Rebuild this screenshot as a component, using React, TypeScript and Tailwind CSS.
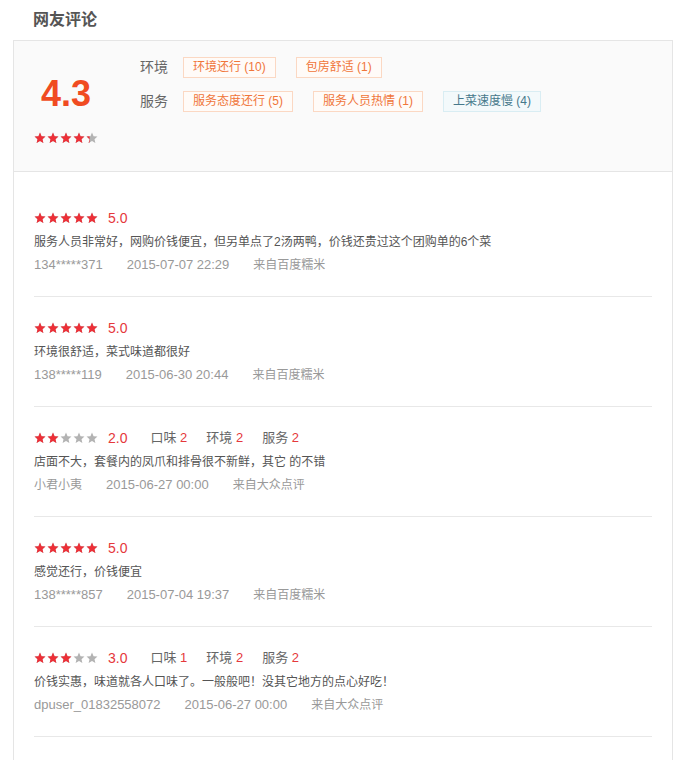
import React from "react";

const FONT = { fontFamily: '"Liberation Sans", "Noto Sans CJK SC", sans-serif' };

const tagRows = [
  {
    label: "环境",
    tags: [
      { text: "环境还行 (10)", bad: false },
      { text: "包房舒适 (1)", bad: false },
    ],
  },
  {
    label: "服务",
    tags: [
      { text: "服务态度还行 (5)", bad: false },
      { text: "服务人员热情 (1)", bad: false },
      { text: "上菜速度慢 (4)", bad: true },
    ],
  },
];

type Review = {
  score: number;
  sub?: [number, number, number];
  text: string;
  user: string;
  userCjk?: boolean;
  time: string;
  source: string;
};

const reviews: Review[] = [
  {
    score: 5,
    text: "服务人员非常好，网购价钱便宜，但另单点了2汤两鸭，价钱还贵过这个团购单的6个菜",
    user: "134*****371",
    time: "2015-07-07 22:29",
    source: "来自百度糯米",
  },
  {
    score: 5,
    text: "环境很舒适，菜式味道都很好",
    user: "138*****119",
    time: "2015-06-30 20:44",
    source: "来自百度糯米",
  },
  {
    score: 2,
    sub: [2, 2, 2],
    text: "店面不大，套餐内的凤爪和排骨很不新鲜，其它 的不错",
    user: "小君小夷",
    userCjk: true,
    time: "2015-06-27 00:00",
    source: "来自大众点评",
  },
  {
    score: 5,
    text: "感觉还行，价钱便宜",
    user: "138*****857",
    time: "2015-07-04 19:37",
    source: "来自百度糯米",
  },
  {
    score: 3,
    sub: [1, 2, 2],
    text: "价钱实惠，味道就各人口味了。一般般吧！没其它地方的点心好吃！",
    user: "dpuser_01832558072",
    time: "2015-06-27 00:00",
    source: "来自大众点评",
  },
];

const STAR = "M6 0.6l1.55 3.6 3.9.35-2.95 2.58.88 3.82L6 8.95 2.62 10.95l.88-3.82L.55 4.55l3.9-.35z";

function Stars({ value, id }: { value: number; id: string }) {
  return (
    <span className="flex gap-[1px]">
      {[0, 1, 2, 3, 4].map((i) => {
        const fill = Math.max(0, Math.min(1, value - i));
        return (
          <svg key={i} width="12" height="12" viewBox="0 0 12 12">
            <defs>
              <clipPath id={`${id}-${i}`}>
                <rect x="0" y="0" width={12 * fill} height="12" />
              </clipPath>
            </defs>
            <path d={STAR} fill="#b3b3b3" />
            <path d={STAR} fill="#ed2f37" clipPath={`url(#${id}-${i})`} />
          </svg>
        );
      })}
    </span>
  );
}

export default function App() {
  return (
    <div className="w-[688px] h-[760px] overflow-hidden bg-white" style={FONT}>
      <h2 className="pl-[33px] pt-[9px] h-[40px] text-[16px] font-bold leading-[22px] text-[#555]">网友评论</h2>
      <div className="mx-[13px] w-[660px] border border-[#e5e5e5]">
        <div className="flex h-[131px] border-b border-[#e5e5e5] bg-[#fafafa]">
          <div className="ml-[20px] w-[64px] flex flex-col items-center pt-[33px]">
            <div className="text-[36px] font-bold leading-[40px] text-[#f04b21]">4.3</div>
            <div className="mt-[18px]">
              <Stars value={4.3} id="avg" />
            </div>
          </div>
          <div className="ml-[42px] pt-[16px] flex flex-col gap-[13px]">
            {tagRows.map((row) => (
              <div key={row.label} className="flex items-center">
                <span className="w-[43px] text-[14px] text-[#666]">{row.label}</span>
                <div className="flex gap-[20px]">
                  {row.tags.map((t) => (
                    <span
                      key={t.text}
                      className={
                        t.bad
                          ? "h-[21px] px-[9px] text-[12px] leading-[19px] border border-[#d9edf3] bg-[#f3f9fb] text-[#46788b]"
                          : "h-[21px] px-[9px] text-[12px] leading-[19px] border border-[#fbd8c3] bg-[#fffbf8] text-[#f0763a]"
                      }
                    >
                      {t.text}
                    </span>
                  ))}
                </div>
              </div>
            ))}
          </div>
        </div>
        <div className="px-[20px] pt-[15px] pb-[60px]">
          {reviews.map((r, idx) => (
            <div key={idx} className="pt-[21px] pb-[20px] border-b border-[#e8e8e8]">
              <div className="flex h-[20px] items-center">
                <Stars value={r.score} id={`r${idx}`} />
                <span className="ml-[10px] text-[14px] text-[#e5383b]">{r.score.toFixed(1)}</span>
                {r.sub && (
                  <div className="ml-[23px] flex gap-[19px] text-[13px] text-[#666]">
                    {(["口味", "环境", "服务"] as const).map((k, i) => (
                      <span key={k}>
                        {k} <span className="text-[#e5383b]">{r.sub![i]}</span>
                      </span>
                    ))}
                  </div>
                )}
              </div>
              <p className="mt-[2px] h-[24px] text-[12px] leading-[24px] text-[#555]">{r.text}</p>
              <div className="flex h-[22px] items-center gap-[24px] text-[#999]">
                <span className={r.userCjk ? "text-[12px]" : "text-[13px]"}>{r.user}</span>
                <span className="text-[13px]">{r.time}</span>
                <span className="text-[12px]">{r.source}</span>
              </div>
            </div>
          ))}
        </div>
      </div>
    </div>
  );
}
